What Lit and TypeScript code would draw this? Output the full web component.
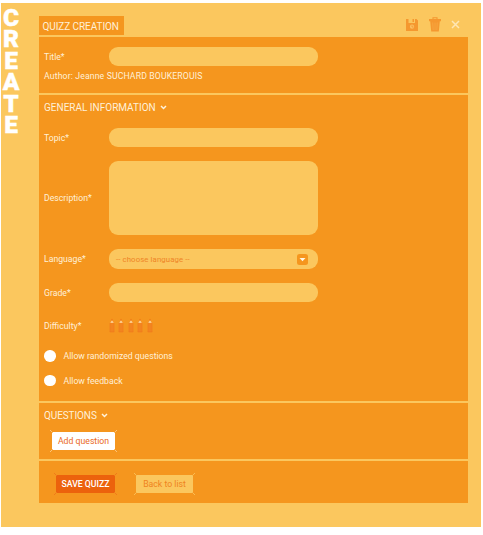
import { LitElement, html, svg, css } from "lit";
import { customElement } from "lit/decorators.js";

const chevron = html`<svg class="chev" viewBox="0 0 7 5"><path d="M1 1 L3.5 3.5 L6 1" fill="none" stroke="#fff3dc" stroke-width="1.5"/></svg>`;

const pencil = html`<svg class="pencil" viewBox="0 0 6 15">
  <path d="M1 4.5 L3 1.500 L5 4.500 V14 H1Z" fill="#f3841f"/>
  <path d="M1.300 5 L2.300 2.600 H3.700 L4.700 5Z" fill="#fbc987"/>
  <path d="M2.300 2.600 L3 .8 L3.700 2.600Z" fill="#ec6410"/>
  <path d="M.9 5 V14 H5.100 V5" fill="none" stroke="#f07a1c" stroke-width=".6"/>
</svg>`;

@customElement("app-root")
export class AppRoot extends LitElement {
  static styles = css`
    :host {
      display: block;
      width: 483px;
      height: 535px;
      box-sizing: border-box;
      padding: 3px 2px 8px 1px;
      background: #fff;
      overflow: hidden;
      font: 8.7px/12px Roboto, "Liberation Sans", sans-serif;
      color: #fff0d8;
      white-space: nowrap;
    }
    .page { display: flex; width: 480px; height: 524px; background: #fbc75e; }
    .side {
      width: 20px; margin-right: 18px; padding-top: 4px; box-sizing: border-box;
      display: flex; flex-direction: column; align-items: center;
      font: 900 24.5px/21.4px Roboto, sans-serif; color: #fff;
      -webkit-text-stroke: .4px #fff;
    }
    .main { width: 429px; padding-top: 13px; }
    .head { display: flex; height: 19px; margin-bottom: 2px; }
    .tab { width: 85px; box-sizing: border-box; padding-left: 3.500px; background: #f5961e; font-size: 10px; line-height: 21px; }
    .t-tab { letter-spacing: -.08px; }
    .tools { margin-left: auto; display: flex; align-items: flex-start; padding-right: 8px; }
    .tools svg { display: block; }
    .disk { width: 12px; height: 12px; margin: 3px 11px 0 0; }
    .bin { width: 12px; height: 15px; margin: 1px 10px 0 0; }
    .close { width: 9px; height: 9px; margin-top: 4px; }
    .panel { box-sizing: border-box; background: #f5961e; margin-bottom: 2px; padding-left: 5px; }
    .p1 { height: 56px; padding-top: 10px; }
    .p2 { height: 306px; padding-top: 6px; }
    .p3 { height: 56px; padding-top: 6px; }
    .p4 { height: 42px; padding: 14px 0 0 16px; display: flex; gap: 21px; }
    .row { display: flex; align-items: center; }
    .row > .label { width: 65px; }
    .field { width: 209px; height: 19px; border-radius: 9px; background: #fbc75e; box-sizing: border-box; }
    .area { height: 74px; }
    .author { margin-top: 4px; }
    .t-author { letter-spacing: .13px; }
    .heading { display: flex; align-items: center; font-size: 10px; height: 13px; }
    .chev { width: 7px; height: 5px; margin-left: 4px; }
    .t-questions { letter-spacing: -.1px; }
    .topic { margin-top: 14px; }
    .desc { margin-top: 14px; }
    .lang { margin-top: 14px; }
    .select { display: flex; align-items: center; justify-content: space-between; padding: 1px 10px 0 7px; height: 20px; color: #ef8526; font-size: 7.800px; }
    .t-choose { letter-spacing: .1px; padding-top: 1px; }
    .drop { width: 11px; height: 11px; }
    .grade { margin-top: 14px; }
    .diff { margin-top: 16px; height: 15px; }
    .pencils { display: flex; gap: 3.400px; }
    .pencil { width: 6px; height: 15px; }
    .check { display: flex; align-items: center; height: 12px; gap: 8px; }
    .dot { width: 11.500px; height: 11.500px; border-radius: 50%; background: #fff; }
    .c1 { margin-top: 17px; }
    .c2 { margin-top: 12.500px; }
    .btn { position: relative; height: 18px; line-height: 18px; text-align: center; }
    .corners { position: absolute; left: -2px; top: -2px; width: calc(100% + 4px); height: calc(100% + 4px); display: block; }
    .add { width: 63px; margin: 10px 0 0 8px; background: #fff; color: #ea691b; }
    .save { width: 59px; margin-left: 1px; background: #ec620c; color: #fff; font-weight: 500; }
    .back { width: 57px; background: #fbc75e; color: #ef8320; }
  `;

  private corners(w: number, color: string) {
    return html`<svg class="corners" viewBox="0 0 ${w + 4} 22">
      ${svg`<path d="M0 0L3 3M${w + 4} 0l-3 3M0 22l3-3M${w + 4} 22l-3-3" stroke=${color} stroke-width="1"/>`}
    </svg>`;
  }

  render() {
    return html`
      <div class="page">
        <div class="side">${[..."CREATE"].map((c) => html`<span>${c}</span>`)}</div>
        <div class="main">
          <div class="head">
            <div class="tab"><span class="t-tab">QUIZZ CREATION</span></div>
            <div class="tools">
              <svg class="disk" viewBox="0 0 12 12">
                <path fill="#f5982f" d="M0 0H2.500V4H9V0H10.500L12 1.500V12H0ZM6.500 0H8V3H6.500Z"/>
                <circle cx="6" cy="7.700" r="2.100" fill="#fbc061"/>
                <path d="M6 6.300V8H7.400" fill="none" stroke="#f5982f" stroke-width=".8"/>
              </svg>
              <svg class="bin" viewBox="0 0 12 15">
                <path d="M4 2.300V.7H8V2.300" fill="none" stroke="#f5982f" stroke-width="1.100"/>
                <path fill="#f5982f" d="M0 2H12V4.300H0ZM1.200 4.300H10.800L9.800 14.500H2.200Z"/>
                <path d="M3.700 5.500L4.200 13M6 5.500V13M8.300 5.500L7.800 13" stroke="#f8ab46" stroke-width=".7"/>
              </svg>
              <svg class="close" viewBox="0 0 9 9"><path d="M1 1L8 8M8 1L1 8" stroke="#ffe7b5" stroke-width="1.500"/></svg>
            </div>
          </div>
          <div class="panel p1">
            <div class="row"><span class="label">Title*</span><div class="field"></div></div>
            <div class="author"><span class="t-author">Author: Jeanne SUCHARD BOUKEROUIS</span></div>
          </div>
          <div class="panel p2">
            <div class="heading"><span>GENERAL INFORMATION</span>${chevron}</div>
            <div class="row topic"><span class="label">Topic*</span><div class="field"></div></div>
            <div class="row desc"><span class="label">Description*</span><div class="field area"></div></div>
            <div class="row lang"><span class="label">Language*</span>
              <div class="field select"><span class="t-choose">-- choose language --</span>
                <svg class="drop" viewBox="0 0 11 11"><rect width="11" height="11" rx="2.500" fill="#f5961e"/><path d="M2.500 4H8.500L5.500 7.300Z" fill="#fff6e4"/></svg>
              </div>
            </div>
            <div class="row grade"><span class="label">Grade*</span><div class="field"></div></div>
            <div class="row diff"><span class="label">Difficulty*</span><div class="pencils">${[1, 2, 3, 4, 5].map(() => pencil)}</div></div>
            <div class="check c1"><span class="dot"></span><span>Allow randomized questions</span></div>
            <div class="check c2"><span class="dot"></span><span>Allow feedback</span></div>
          </div>
          <div class="panel p3">
            <div class="heading"><span class="t-questions">QUESTIONS</span>${chevron}</div>
            <div class="btn add">${this.corners(63, "#fbc37a")}<span>Add question</span></div>
          </div>
          <div class="panel p4">
            <div class="btn save">${this.corners(59, "#f07a1a")}<span>SAVE QUIZZ</span></div>
            <div class="btn back">${this.corners(57, "#f9bd54")}<span>Back to list</span></div>
          </div>
        </div>
      </div>
    `;
  }
}
